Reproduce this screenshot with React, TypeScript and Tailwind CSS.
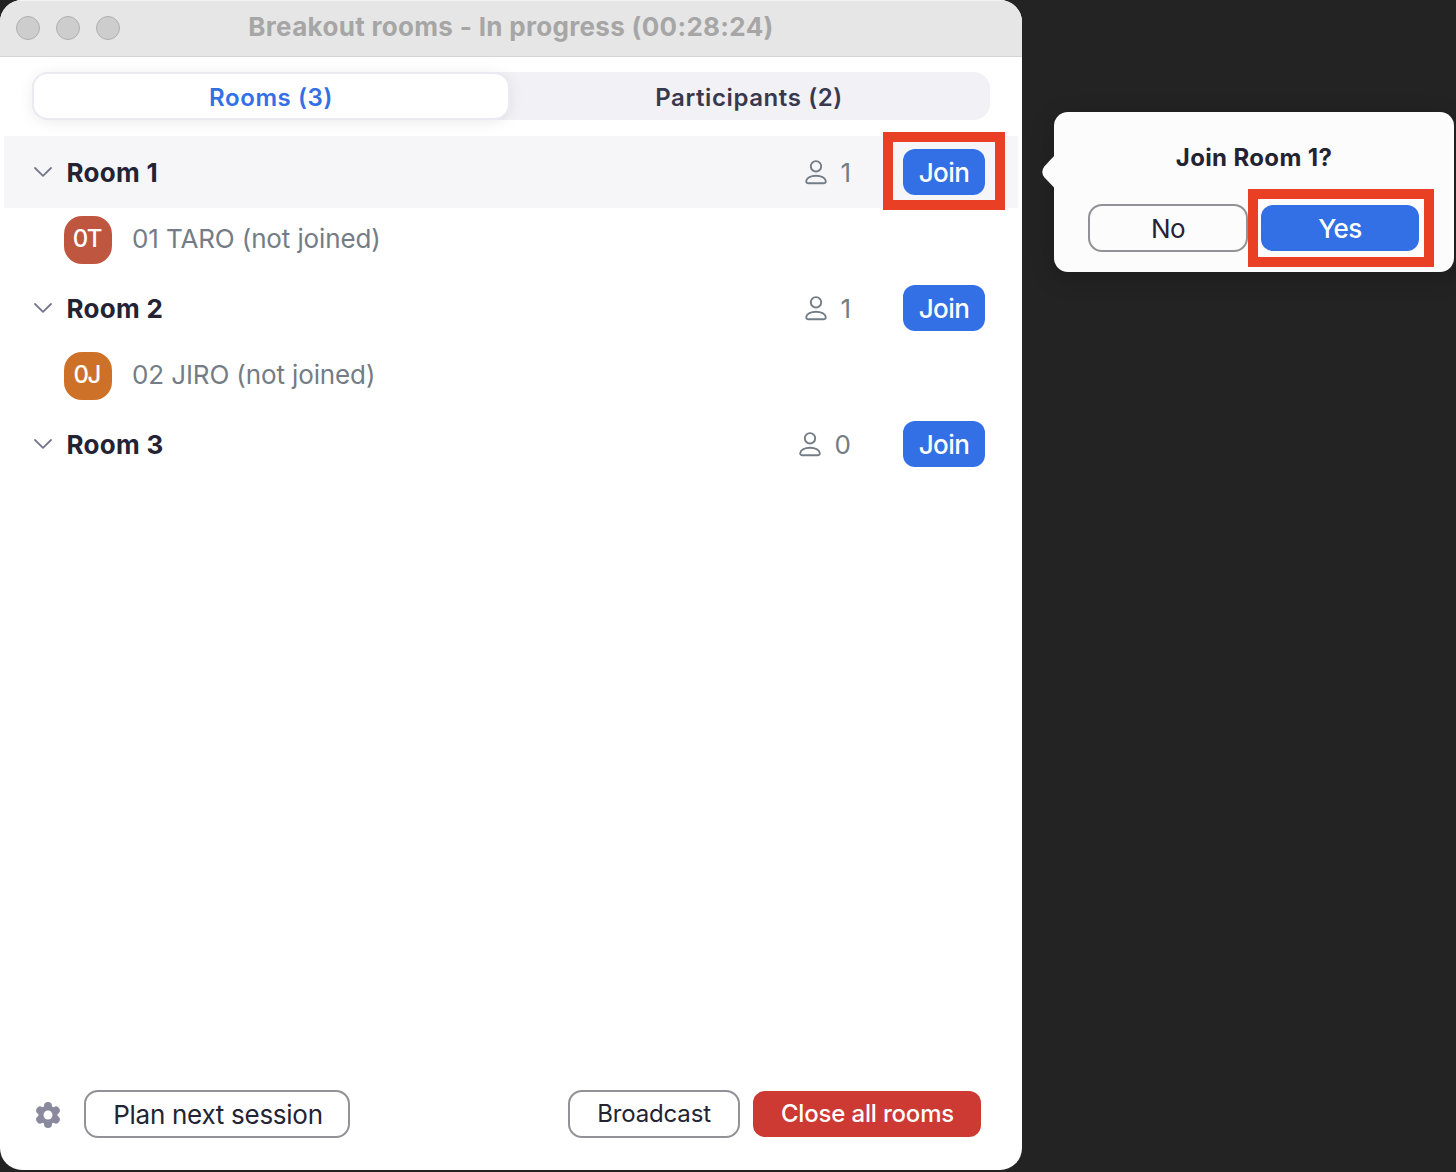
import React from "react";

type Member = { initials: string; name: string; color: string };
type Room = { name: string; count: number; members: Member[]; active?: boolean };

const rooms: Room[] = [
  {
    name: "Room 1",
    count: 1,
    active: true,
    members: [{ initials: "0T", name: "01 TARO (not joined)", color: "bg-[#bf5640]" }],
  },
  {
    name: "Room 2",
    count: 1,
    members: [{ initials: "0J", name: "02 JIRO (not joined)", color: "bg-[#ce7128]" }],
  },
  { name: "Room 3", count: 0, members: [] },
];

function Chevron() {
  return (
    <svg width="20" height="12" viewBox="0 0 20 12" fill="none" className="block">
      <path d="M2 2 L10 9.8 L18 2" stroke="#77758c" strokeWidth="1.8" strokeLinecap="round" strokeLinejoin="round" />
    </svg>
  );
}

function Person() {
  return (
    <svg width="22" height="26" viewBox="0 0 22 26" fill="none" stroke="#747c85" strokeWidth="1.9" className="block">
      <circle cx="11" cy="7.3" r="5.2" />
      <path d="M3.4 24.2 C1.9 24.2 1 23.3 1.2 22.1 C1.8 18.8 6 16.8 11 16.8 S20.2 18.8 20.8 22.1 C21 23.3 20.1 24.2 18.6 24.2 Z" />
    </svg>
  );
}

function Gear() {
  return (
    <svg width="26" height="28" viewBox="-13 -14 26 28" className="mt-0.5 block">
      <circle r="9.6" fill="#8b899d" />
      {[0, 60, 120, 180, 240, 300].map((a) => (
        <circle key={a} cx="0" cy="-9" r="4" fill="#8b899d" transform={`rotate(${a})`} />
      ))}
      <circle r="4.5" fill="#fff" />
    </svg>
  );
}

function RoomRow({ room }: { room: Room }) {
  return (
    <>
      <div className={`flex h-[72px] items-center pl-[29px] pr-[33px] ${room.active ? "bg-[#f6f6f9]" : ""}`}>
        <Chevron />
        <span className="ml-[13.5px] flex-1 pt-0.5 text-[26px] font-bold leading-8 tracking-[0.3px] text-[#232333]">{room.name}</span>
        <Person />
        <span className="ml-[13.5px] mr-[52px] pt-0.5 text-[26px] leading-8 text-[#747c85]">{room.count}</span>
        <button className="relative h-[46px] w-[82px] rounded-xl bg-[#3370e5] text-[26px] font-medium leading-[48px] tracking-[-0.6px] text-white">
          Join
          {room.active && <span className="absolute -left-5 -right-5 -top-[17px] -bottom-[15px] border-[10px] border-[#e93f25]" />}
        </button>
      </div>
      {room.members.map((m) => (
        <div key={m.name} className="flex h-16 items-center pl-[60px]">
          <span className={`flex h-12 w-12 justify-center rounded-[18px] pr-[2.5px] text-[24px] font-medium leading-[45px] tracking-[-1.5px] text-white ${m.color}`}>
            {m.initials}
          </span>
          <span className="ml-5 pb-0.5 text-[26px] leading-8 tracking-[-0.12px] text-[#747c85]">{m.name}</span>
        </div>
      ))}
    </>
  );
}

export default function App() {
  return (
    <div className="flex h-[1172px] w-[1456px] items-start overflow-hidden bg-[#232323] font-['Inter',sans-serif]">
      <main className="flex h-[1170px] w-[1022px] flex-col overflow-hidden rounded-[22px] bg-white">
        <header className="grid h-[57px] shrink-0 grid-cols-[120px_1fr_120px] items-center border-b border-[#d4d4d4] border-t border-t-[#f3f3f3] bg-[#e6e6e6]">
          <div className="flex gap-4 pb-[2px] pl-4">
            {[0, 1, 2].map((i) => (
              <span key={i} className="h-6 w-6 shrink-0 rounded-full border border-[#b0b0b0] bg-[#cdcdcd]" />
            ))}
          </div>
          <h1 className="whitespace-nowrap pb-[3px] text-center text-[26px] font-bold leading-8 tracking-[0.32px] text-[#a6a6a6]">
            Breakout rooms - In progress (00:28:24)
          </h1>
        </header>

        <nav className="ml-8 mt-[15px] flex h-12 w-[958px] shrink-0 rounded-2xl bg-[#f2f1f6] text-center text-[24px] font-semibold">
          <div className="my-0.5 ml-0.5 h-11 w-[474px] rounded-[14px] bg-white leading-[48px] tracking-[0.6px] text-[#3370e5] shadow-[0_0_0_2px_#ebeaf1,0_2px_16px_rgba(0,0,0,0.10)]">
            Rooms (3)
          </div>
          <div className="flex-1 leading-[52px] tracking-[0.6px] text-[#39394d]">Participants (2)</div>
        </nav>

        <section className="mx-1 mt-4 flex-1">
          {rooms.map((r) => (
            <RoomRow key={r.name} room={r} />
          ))}
        </section>

        <footer className="mb-8 flex h-12 shrink-0 items-center pl-[35px] pr-[41px]">
          <Gear />
          <button className="ml-[23px] h-12 w-[266px] rounded-[14px] border-2 border-[#919197] pl-0.5 text-[26px] leading-[46px] tracking-[-0.28px] text-[#232333]">
            Plan next session
          </button>
          <button className="ml-auto h-12 w-[172px] rounded-[14px] border-2 border-[#919197] text-[24px] leading-[44px] tracking-[-0.15px] text-[#232333]">
            Broadcast
          </button>
          <button className="ml-[13px] h-[46px] w-[228px] rounded-xl bg-[#cc3a33] pl-px text-[24px] font-medium leading-[44px] tracking-[-0.17px] text-white">
            Close all rooms
          </button>
        </footer>
      </main>

      <aside className="relative ml-8 mt-28 h-40 w-[400px] rounded-[14px] bg-[#fcfcfc] pt-[30px] shadow-[0_6px_24px_rgba(0,0,0,0.2)]">
        <svg width="13" height="36" viewBox="0 0 13 36" className="absolute -left-3 top-[42px]">
          <path d="M13 1 L2.5 12.2 Q-2 18 2.5 23.4 L13 34.5 Z" fill="#fcfcfc" />
        </svg>
        <h2 className="text-center text-[24px] font-bold leading-8 tracking-[0.35px] text-[#232333]">Join Room 1?</h2>
        <div className="mt-[30px] flex items-center pl-[34px]">
          <button className="h-12 w-40 rounded-[14px] border-2 border-[#919197] text-[26px] leading-[46px] tracking-[-0.5px] text-[#232333]">No</button>
          <button className="relative ml-[13px] h-[46px] w-[158px] rounded-xl bg-[#3370e5] text-[26px] font-medium leading-[48px] tracking-[-0.6px] text-white">
            Yes
            <span className="absolute -left-[13px] -right-[15px] -top-4 -bottom-4 border-[10px] border-[#e93f25]" />
          </button>
        </div>
      </aside>
    </div>
  );
}
